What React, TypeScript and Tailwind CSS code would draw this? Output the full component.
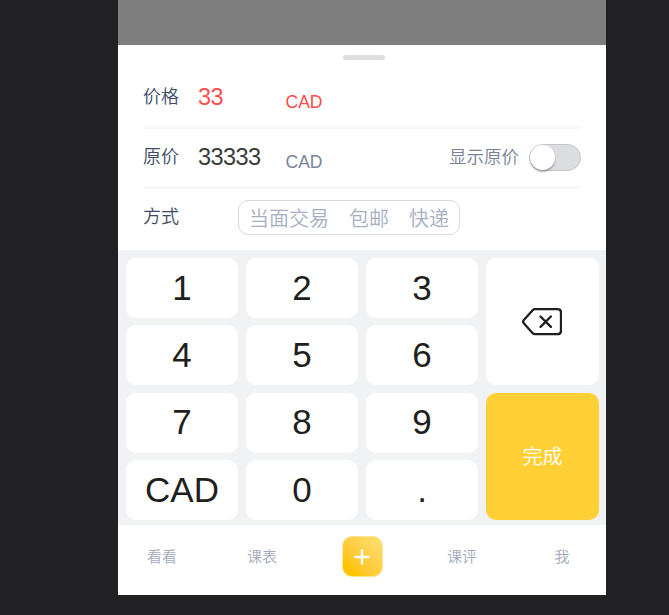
import React from "react";

const keys = ["1", "2", "3", "4", "5", "6", "7", "8", "9", "CAD", "0", "."];

const keyPlace = [
  "col-start-1 row-start-1", "col-start-2 row-start-1", "col-start-3 row-start-1",
  "col-start-1 row-start-2", "col-start-2 row-start-2", "col-start-3 row-start-2",
  "col-start-1 row-start-3", "col-start-2 row-start-3", "col-start-3 row-start-3",
  "col-start-1 row-start-4", "col-start-2 row-start-4", "col-start-3 row-start-4",
];

function Label({ children }: { children: React.ReactNode }) {
  return <span className="w-[55px] shrink-0 pb-px text-[18px] font-[350] leading-6 text-[#3d4a65]">{children}</span>;
}

function PriceForm() {
  return (
    <section className="flex h-[205px] flex-col pl-[25px] pr-[25px]">
      <div className="mt-[10px] ml-[4px] h-[5px] w-[42px] shrink-0 self-center rounded-full bg-[#dedede]" />
      <div className="mt-[9px] flex h-[60px] items-center border-b-[3px] border-[#f8f8f9]">
        <Label>价格</Label>
        <span className="w-[87.5px] pb-0.5 text-[23.5px] leading-6 tracking-[-0.55px] text-[#ff4d4f]">33</span>
        <span className="mt-[9px] text-[17.5px] leading-6 text-[#ff4d4f]">CAD</span>
      </div>
      <div className="flex h-[60px] items-center border-b-[3px] border-[#f8f8f9]">
        <Label>原价</Label>
        <span className="w-[87.5px] pb-0.5 text-[23.5px] leading-6 tracking-[-0.55px] text-[#3a3a3a]">33333</span>
        <span className="mt-[9px] text-[17.5px] leading-6 text-[#7c8499]">CAD</span>
        <span className="ml-auto pb-0.5 text-[17.5px] font-[350] leading-6 text-[#787f96]">显示原价</span>
        <button className="ml-[10px] flex h-[27px] w-[52px] rounded-full border border-[#c3c5c7] bg-[#dcdde0]">
          <span className="h-[25px] w-[25px] rounded-full bg-white shadow-[0_2px_2px_rgba(0,0,0,0.28)]" />
        </button>
      </div>
      <div className="flex h-[57px] items-center">
        <Label>方式</Label>
        <div className="ml-[40px] flex h-[35px] w-[222px] items-center gap-5 rounded-[10px] border border-[#d9dade] pl-[10px] pt-0.5 text-[20px] font-[350] leading-6 text-[#a7aec2]">
          <span>当面交易</span>
          <span>包邮</span>
          <span>快递</span>
        </div>
      </div>
    </section>
  );
}

function Keypad() {
  return (
    <section className="grid h-[275px] grid-cols-[112px_112px_112px_113px] grid-rows-[60px_60px_60px_60px] gap-x-2 gap-y-[7.4px] bg-[#f1f2f4] pl-2 pt-2 text-[#1f1f20]">
      {keys.map((key, i) => (
        <button key={key} className={`flex items-center justify-center rounded-[10px] bg-white pb-[2px] text-[35px] leading-none ${keyPlace[i]}`}>
          {key}
        </button>
      ))}
      <button aria-label="backspace" className="col-start-4 row-span-2 row-start-1 flex items-center justify-center rounded-[10px] bg-white pr-0.5">
        <svg width="40" height="28" viewBox="0 0 40 28" fill="none" stroke="currentColor" strokeWidth="2.3" strokeLinecap="round" strokeLinejoin="round">
          <path d="M12.8 1.2H35.5Q39 1.2 39 4.7V22.7Q39 26.2 35.5 26.2H12.8Q11.7 26.2 10.9 25.4L1.6 15.1Q.7 13.7 1.6 12.3L10.9 2Q11.7 1.2 12.8 1.2Z" />
          <path d="m18.5 8.5 10.4 10.4m0-10.4L18.5 18.9" />
        </svg>
      </button>
      <button className="col-start-4 row-span-2 row-start-3 flex items-center justify-center rounded-[10px] bg-[#ffd035] pt-0.5 text-[20px] font-[350] text-white">完成</button>
    </section>
  );
}

function NavItem({ children }: { children: React.ReactNode }) {
  return <span className="flex w-[100px] justify-center text-[15px] font-[350] leading-5 text-[#a3aabd]">{children}</span>;
}

function BottomNav() {
  return (
    <nav className="flex h-[70px] justify-center bg-white pt-[11px]">
      <div className="flex h-[41px] w-[500px] shrink-0 items-center">
        <NavItem>看看</NavItem>
        <NavItem>课表</NavItem>
        <div className="flex w-[100px] justify-center">
          <button aria-label="add" className="flex h-[41px] w-[41px] items-center justify-center rounded-[10px] border border-[#ffe591] bg-linear-to-tr from-[#ffc300] from-20% to-[#ffdf70]">
            <svg width="16" height="16" viewBox="0 0 16 16" stroke="white" strokeWidth="2.4" strokeLinecap="round">
              <path d="M8 1.5v13M1.5 8h13" />
            </svg>
          </button>
        </div>
        <NavItem>课评</NavItem>
        <NavItem>我</NavItem>
      </div>
    </nav>
  );
}

export default function App() {
  return (
    <main className="h-[615px] w-[669px] overflow-hidden bg-[#212123] pl-[118px] font-['Liberation_Sans','Noto_Sans_CJK_SC',sans-serif]">
      <div className="h-[595px] w-[488px] bg-white">
        <div className="h-[45px] bg-[#7e7e7e]" />
        <PriceForm />
        <Keypad />
        <BottomNav />
      </div>
    </main>
  );
}
